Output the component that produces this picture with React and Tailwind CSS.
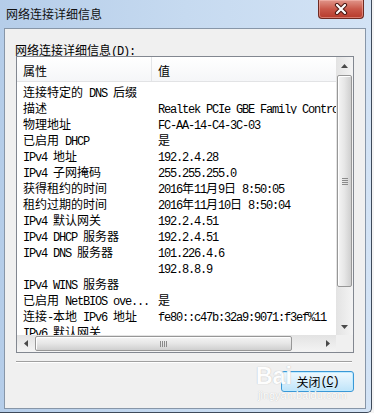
import React from "react";

const CJK = /([\u2E80-\u9FFF\uFF00-\uFFEF\u3000-\u303F]+)/;

function T({ s }) {
  const parts = s.split(CJK).filter((p) => p !== "");
  return parts.map((p, i) =>
    CJK.test(p) ? (
      <span key={i} className="text-[12px] font-['Noto_Sans_CJK_SC',sans-serif]">
        {p}
      </span>
    ) : (
      <span key={i} className="text-[12px] tracking-[-1.2px] whitespace-pre font-['Liberation_Mono',monospace]">
        {p}
      </span>
    )
  );
}

const rows = [
  ["连接特定的 DNS 后缀", ""],
  ["描述", "Realtek PCIe GBE Family Controller"],
  ["物理地址", "FC-AA-14-C4-3C-03"],
  ["已启用 DHCP", "是"],
  ["IPv4 地址", "192.2.4.28"],
  ["IPv4 子网掩码", "255.255.255.0"],
  ["获得租约的时间", "2016年11月9日 8:50:05"],
  ["租约过期的时间", "2016年11月10日 8:50:04"],
  ["IPv4 默认网关", "192.2.4.51"],
  ["IPv4 DHCP 服务器", "192.2.4.51"],
  ["IPv4 DNS 服务器", "101.226.4.6"],
  ["", "192.8.8.9"],
  ["IPv4 WINS 服务器", ""],
  ["已启用 NetBIOS ove...", "是"],
  ["连接-本地 IPv6 地址", "fe80::c47b:32a9:9071:f3ef%11"],
  ["IPv6 默认网关", ""],
];

function Tri({ dir }) {
  const pts = {
    up: "0,4 3.5,0 7,4",
    down: "0,0 7,0 3.5,4",
    left: "4,0 4,7 0,3.5",
    right: "0,0 0,7 4,3.5",
  }[dir];
  const vertical = dir === "up" || dir === "down";
  return (
    <svg width={vertical ? 7 : 4} height={vertical ? 4 : 7} viewBox={vertical ? "0 0 7 4" : "0 0 4 7"}>
      <polygon points={pts} fill="#4a4a4a" />
    </svg>
  );
}

export default function App() {
  return (
    <div className="w-[374px] h-[413px] bg-[#f4f4f4] overflow-hidden font-['Noto_Sans_CJK_SC',sans-serif] text-black">
      <div className="relative w-[372px] h-[413px] flex flex-col border-r border-b border-[#3e4a5a] rounded-br-[5px] bg-gradient-to-r from-[#b5cde9] via-[#c6daf0] to-[#d3e3f5]">
        {/* title bar */}
        <div className="h-[28px] shrink-0 flex justify-between items-start">
          <div className="pl-[6px] pt-[6px] text-[12px] leading-[16px] text-[#111]">网络连接详细信息</div>
          <div className="mr-[7px] w-[46px] h-[19px] rounded-b-[4px] border border-t-0 border-[#6e2a22] bg-gradient-to-b from-[#e0958a] via-[#c9584a] to-[#b63a2b] shadow-[inset_0_0_0_1px_rgba(255,200,190,0.45)] flex items-center justify-center">
            <svg width="14" height="12" viewBox="0 0 14 12">
              <path d="M3 2 L11 10 M11 2 L3 10" stroke="#4a1712" strokeWidth="4.2" strokeLinecap="round" />
              <path d="M3 2 L11 10 M11 2 L3 10" stroke="#ffffff" strokeWidth="2.2" strokeLinecap="round" />
            </svg>
          </div>
        </div>

        {/* inner panel */}
        <div className="flex-1 ml-[4px] mr-[5px] mb-[3px] border border-[#8796a8] bg-[#f0f0f0] flex flex-col">
          <div className="pl-[10px] pt-[12px] leading-[14px] h-[26px] whitespace-nowrap">
            <span className="text-[12px]">网络连接详细信息</span>
            <span className="text-[12px] tracking-[-1.2px] font-['Liberation_Mono',monospace]">
              (<u>D</u>):
            </span>
          </div>

          {/* list box */}
          <div className="ml-[11px] mt-[1px] w-[338px] h-[297px] shrink-0 border border-[#828790] bg-white flex flex-col">
            <div className="h-[278px] flex">
              <div className="w-[319px] h-[278px] overflow-hidden flex flex-col">
                <div className="h-[25px] shrink-0 flex bg-gradient-to-b from-white to-[#f5f6f8] border-b border-[#e2e3e5]">
                  <div className="w-[135px] pl-[6px] pt-[6px] leading-[16px] text-[12px] border-r border-[#e3e5e8]">属性</div>
                  <div className="flex-1 pl-[6px] pt-[6px] leading-[16px] text-[12px]">值</div>
                </div>
                {rows.map(([k, v], i) => (
                  <div key={i} className="h-[16px] shrink-0 flex leading-[16px] overflow-hidden">
                    <div className="w-[135px] shrink-0 pl-[6px] whitespace-nowrap overflow-hidden">
                      <T s={k} />
                    </div>
                    <div className="w-[184px] shrink-0 pl-[6px] whitespace-nowrap overflow-hidden">
                      <T s={v} />
                    </div>
                  </div>
                ))}
              </div>
              {/* vertical scrollbar */}
              <div className="w-[17px] h-[278px] flex flex-col bg-gradient-to-r from-[#e3e3e3] to-[#f4f4f4]">
                <div className="h-[17px] flex items-center justify-center">
                  <Tri dir="up" />
                </div>
                <div className="flex-1 px-[1px] pt-[1px]">
                  <div className="h-[212px] w-[15px] rounded-[2px] border border-[#979797] bg-gradient-to-r from-[#f5f5f5] via-[#e6e6e6] to-[#cfcfcf] shadow-[inset_1px_1px_0_#ffffff] flex items-center justify-center">
                    <div className="flex flex-col gap-[1px]">
                      <div className="w-[6px] h-[1px] bg-[#8a8a8a]" />
                      <div className="w-[6px] h-[1px] bg-[#8a8a8a]" />
                      <div className="w-[6px] h-[1px] bg-[#8a8a8a]" />
                      <div className="w-[6px] h-[1px] bg-[#8a8a8a]" />
                    </div>
                  </div>
                </div>
                <div className="h-[17px] flex items-center justify-center">
                  <Tri dir="down" />
                </div>
              </div>
            </div>
            {/* horizontal scrollbar */}
            <div className="h-[17px] flex">
              <div className="w-[319px] flex bg-gradient-to-b from-[#e3e3e3] to-[#f4f4f4]">
                <div className="w-[17px] flex items-center justify-center">
                  <Tri dir="left" />
                </div>
                <div className="flex-1 pl-[1px] pt-[1px]">
                  <div className="w-[257px] h-[15px] rounded-[2px] border border-[#979797] bg-gradient-to-b from-[#f5f5f5] via-[#e6e6e6] to-[#cfcfcf] shadow-[inset_1px_1px_0_#ffffff] flex items-center justify-center">
                    <div className="flex gap-[1px]">
                      <div className="w-[1px] h-[6px] bg-[#8a8a8a]" />
                      <div className="w-[1px] h-[6px] bg-[#8a8a8a]" />
                      <div className="w-[1px] h-[6px] bg-[#8a8a8a]" />
                      <div className="w-[1px] h-[6px] bg-[#8a8a8a]" />
                    </div>
                  </div>
                </div>
                <div className="w-[17px] flex items-center justify-center">
                  <Tri dir="right" />
                </div>
              </div>
              <div className="w-[17px] bg-[#f0f0f0]" />
            </div>
          </div>

          {/* separator */}
          <div className="ml-[11px] mt-[8px] w-[336px] h-[2px] border-t border-[#a0a0a0] border-b border-b-white" />

          {/* button */}
          <div className="self-end mr-[11px] mt-[8px] w-[73px] h-[21px] rounded-[3px] border border-[#3a98d6] bg-gradient-to-b from-[#eef8fe] via-[#d8effc] to-[#bfe4f9] shadow-[inset_0_0_0_1px_#bfeaff] flex items-center justify-center leading-[16px] whitespace-nowrap">
            <span className="text-[12px]">关闭</span>
            <span className="text-[12px] tracking-[-1.2px] font-['Liberation_Mono',monospace]">
              (<u>C</u>)
            </span>
          </div>
        </div>

        {/* watermark */}
        <div className="absolute left-[256px] top-[364px] text-[23px] font-bold leading-[24px] font-['Liberation_Sans',sans-serif] text-white [text-shadow:0_0_1px_#a9a9a9] opacity-90 pointer-events-none">
          Bai
        </div>
        <div className="absolute left-[258px] top-[389px] text-[11px] leading-[12px] font-['Liberation_Sans',sans-serif] text-white [text-shadow:0_0_1px_#b0b0b0] pointer-events-none">
          jingyan.baidu.com
        </div>
      </div>
    </div>
  );
}
